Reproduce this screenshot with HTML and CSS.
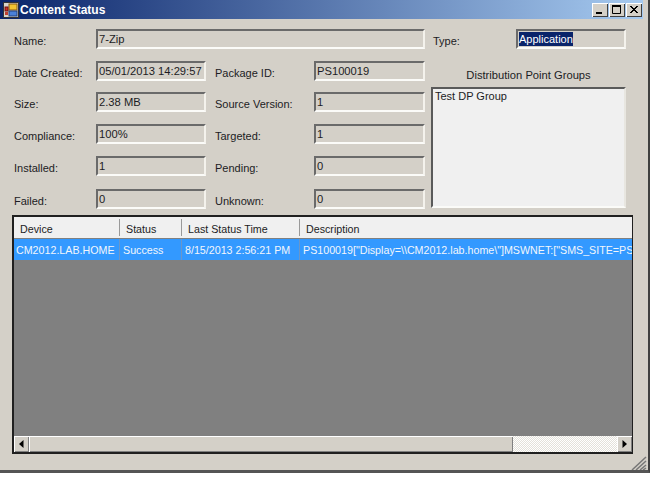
FILE: index.html
```html
<!DOCTYPE html>
<html lang="en">
<head>
<meta charset="utf-8">
<title>Content Status</title>
<link rel="stylesheet" href="styles.css">
</head>
<body>
<div class="window">
  <div class="titlebar">
    <svg class="appicon" width="16" height="16" viewBox="0 0 16 16">
      <rect x="0.5" y="0.5" width="15" height="15" fill="#d8d4cc" stroke="#333"/>
      <rect x="6" y="2" width="8" height="6" fill="#f2c230" stroke="#8a5a10"/>
      <rect x="2" y="5" width="3" height="4" fill="#d03020" stroke="#701010"/>
      <rect x="2" y="10" width="3" height="3" fill="#c04030"/>
      <rect x="6" y="9" width="8" height="5" fill="#4a80d8" stroke="#204080"/>
    </svg>
    <span class="title">Content Status</span>
    <div class="winbtns">
      <div class="winbtn"><svg width="16" height="14" viewBox="0 0 16 14"><rect x="4" y="9" width="6" height="2" fill="#000"/></svg></div>
      <div class="winbtn"><svg width="16" height="14" viewBox="0 0 16 14"><path d="M3.500 2.500h8v8h-8z" fill="none" stroke="#000"/><rect x="3" y="2" width="9" height="2" fill="#000"/></svg></div>
      <div class="winbtn"><svg width="16" height="14" viewBox="0 0 16 14"><path d="M4 3l7 7M5 3l7 7M11 3l-7 7M12 3l-7 7" stroke="#000" fill="none"/></svg></div>
    </div>
  </div>
  <div class="content">
    <div class="form">
      <div class="fields">
        <span class="label">Name:</span>
        <div class="box wide">7-Zip</div>
        <span class="label">Date Created:</span>
        <div class="box">05/01/2013 14:29:57</div>
        <span class="label second">Package ID:</span>
        <div class="box">PS100019</div>
        <span class="label">Size:</span>
        <div class="box">2.38 MB</div>
        <span class="label second">Source Version:</span>
        <div class="box">1</div>
        <span class="label">Compliance:</span>
        <div class="box">100%</div>
        <span class="label second">Targeted:</span>
        <div class="box">1</div>
        <span class="label">Installed:</span>
        <div class="box">1</div>
        <span class="label second">Pending:</span>
        <div class="box">0</div>
        <span class="label">Failed:</span>
        <div class="box">0</div>
        <span class="label second">Unknown:</span>
        <div class="box">0</div>
      </div>
      <div class="side">
        <div class="typerow">
          <span class="label typelabel">Type:</span>
          <div class="box typebox"><span class="selected">Application</span></div>
        </div>
        <div class="groupshead">Distribution Point Groups</div>
        <div class="listbox">Test DP Group</div>
      </div>
    </div>
    <div class="table">
      <div class="thead">
        <div class="th c1">Device</div>
        <div class="th c2">Status</div>
        <div class="th c3">Last Status Time</div>
        <div class="th c4">Description</div>
      </div>
      <div class="row">
        <div class="td c1">CM2012.LAB.HOME</div>
        <div class="td c2">Success</div>
        <div class="td c3">8/15/2013 2:56:21 PM</div>
        <div class="td c4">PS100019["Display=\\CM2012.lab.home\"]MSWNET:["SMS_SITE=PS1"]\\CM2012.lab.home\</div>
      </div>
      <div class="empty"></div>
      <div class="hscroll">
        <div class="arrowbtn"><svg width="5" height="8" viewBox="0 0 5 8"><path d="M4.500 0v8L0 4z" fill="#000"/></svg></div>
        <div class="thumb"></div>
        <div class="track"></div>
        <div class="arrowbtn"><svg width="5" height="8" viewBox="0 0 5 8"><path d="M0.500 0v8L5 4z" fill="#000"/></svg></div>
      </div>
    </div>
    <div class="statusrow">
      <svg width="16" height="14" viewBox="0 0 16 14"><path d="M15 1L1 14M15 5L5 14M15 9L9 14M15 12L12 14" stroke="#777" stroke-width="1.500" fill="none"/></svg>
    </div>
  </div>
</div>
</body>
</html>
```
FILE: styles.css
```css
* { box-sizing: border-box; }
html, body { margin: 0; padding: 0; background: #fff; }
body { width: 652px; height: 477px; overflow: hidden; font: 11px/14px "Liberation Sans", Arial, sans-serif; color: #1c1c24; }
.window {
  width: 650px; height: 473px; background: #d4d0c8;
  border-right: 2px solid #404040; border-bottom: 3px solid #555;
  display: flex; flex-direction: column;
}
.titlebar {
  height: 19px; flex: none; display: flex; align-items: center; padding: 0 1px 0 3px;
  background: linear-gradient(to right, #0a246a, #a6caf0);
  margin-right: 5px;
}
.appicon { flex: none; }
.title { margin-left: 1px; color: #fff; font-weight: bold; font-size: 12px; }
.winbtns { margin-left: auto; display: flex; }
.winbtn {
  width: 16px; height: 14px; background: #d4d0c8; margin-left: 1px;
  box-shadow: inset 1px 1px 0 #fff, inset -1px -1px 0 #404040; display: flex;
}
.content { flex: 1; padding: 10px 0 0 12px; display: flex; flex-direction: column; min-height: 0; }
.form { display: flex; height: 180px; flex: none; }
.fields {
  width: 413px; padding-left: 2px; display: grid; flex: none;
  grid-template-columns: 82px 110px 108px 111px;
  grid-template-rows: 32px 31px 32px 32px 33px 20px;
  align-items: start;
}
.label { display: block; line-height: 20px; height: 20px; padding-top: 2px; white-space: nowrap; }
.fields .second { padding-left: 9px; }
.box {
  height: 20px; background: #d4d0c8; padding: 1px 0 0 1px; white-space: nowrap; overflow: hidden; font-size: 11.2px;
  border: 2px solid; border-color: #6a6a6a #f4f2ec #fbfbf8 #6a6a6a; line-height: 14px;
}
.wide { grid-column: 2 / 5; }
.side { margin-left: 6px; width: 195px; flex: none; display: flex; flex-direction: column; }
.typerow { display: flex; height: 20px; margin-left: 2px; }
.typelabel { width: 83px; }
.typebox { width: 110px; font-size: 11px; }
.selected { background: #0a246a; color: #fff; display: inline-block; height: 14px; }
.groupshead { margin-top: 18px; text-align: center; height: 16px; line-height: 16px; font-size: 11.2px; }
.listbox {
  margin-top: 4px; height: 121px; background: #f0f0f0; padding: 0 2px;
  border: 2px solid; border-color: #5a5a5a #e8e6e0 #fbfbf8 #5a5a5a;
}
.table {
  width: 621px; height: 239px; margin-top: 6px; flex: none; background: #808080;
  border: 2px solid #202020; border-right-width: 1px;
  display: flex; flex-direction: column; overflow: hidden;
}
.thead { display: flex; height: 21px; flex: none; background: #f0f0f0; margin-bottom: 1px; font-size: 10.7px; }
.th { height: 100%; line-height: 24px; padding-left: 6px; position: relative; white-space: nowrap; }
.th:not(.c4)::after { content: ""; position: absolute; right: 0; top: 2px; bottom: 2px; width: 1px; background: #999; }
.c1 { width: 106px; flex: none; }
.c2 { width: 62px; flex: none; }
.c3 { width: 118px; flex: none; }
.c4 { flex: 1; min-width: 0; }
.row { display: flex; height: 21px; flex: none; background: #3399ff; color: #f2f6fc; line-height: 22px; font-size: 10.7px; }
.td { padding-left: 2px; white-space: nowrap; overflow: hidden; border-right: 1px solid #6a96c8; }
.td.c2 { padding-left: 3px; }
.td.c3 { padding-left: 3px; }
.td.c4 { padding-left: 3px; border-right: 0; }
.empty { flex: 1; }
.hscroll { height: 16px; flex: none; display: flex; background: #d4d0c8; }
.arrowbtn {
  width: 15px; flex: none; display: flex; align-items: center; justify-content: center;
  background: #d4d0c8; box-shadow: inset 1px 1px 0 #fff, inset -1px -1px 0 #808080;
}
.thumb { width: 484px; flex: none; background: #d4d0c8; box-shadow: inset 1px 1px 0 #fff, inset -1px -1px 0 #808080; }
.track { flex: 1; background: repeating-conic-gradient(#fff 0 25%, #e4e1da 0 50%) 0 0 / 2px 2px; }
.statusrow { flex: 1; display: flex; justify-content: flex-end; align-items: flex-end; padding-right: 1px; }
```
